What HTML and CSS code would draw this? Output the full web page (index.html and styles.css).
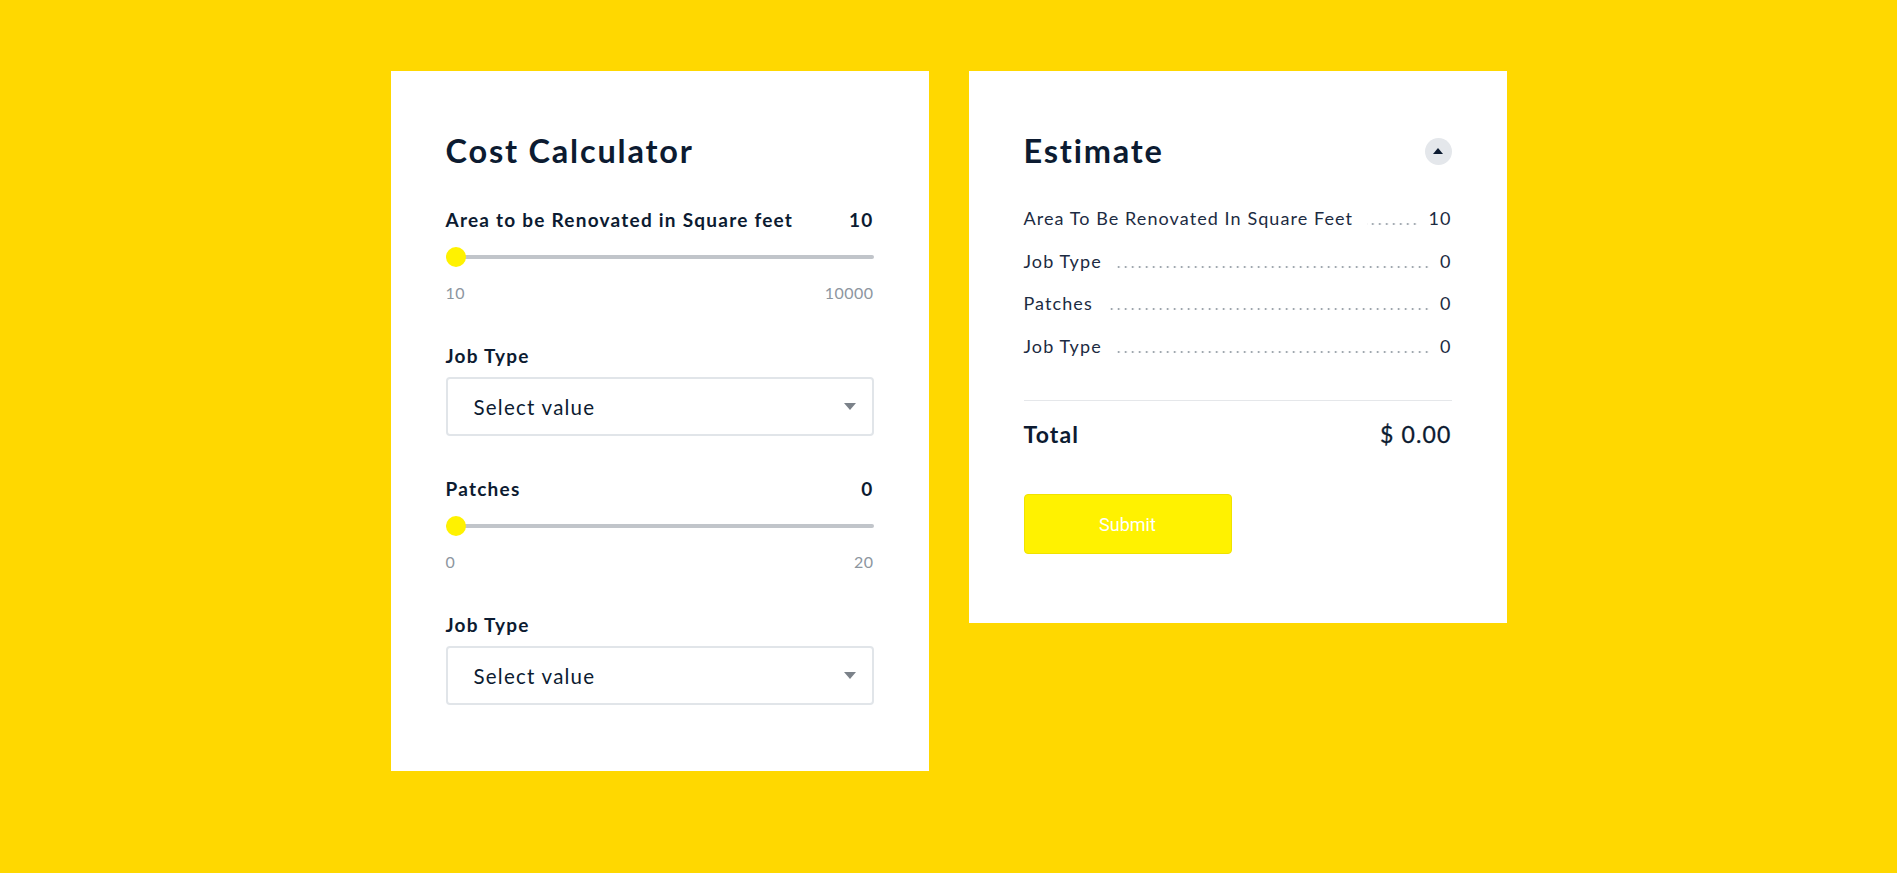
FILE: index.html
```html
<!DOCTYPE html>
<html lang="en">
<head>
<meta charset="utf-8">
<title>Cost Calculator</title>
<link rel="stylesheet" href="styles.css">
</head>
<body>
<div class="page">
  <section class="card calc">
    <h1 class="card-title">Cost Calculator</h1>
    <div class="fields">
      <div class="field">
        <div class="field-head"><span>Area to be Renovated in Square feet</span><span>10</span></div>
        <div class="slider"><div class="track"></div><div class="thumb"></div></div>
        <div class="range"><span>10</span><span>10000</span></div>
      </div>
      <div class="field">
        <div class="field-head"><span>Job Type</span></div>
        <div class="select"><span>Select value</span><span class="caret"></span></div>
      </div>
      <div class="field">
        <div class="field-head"><span>Patches</span><span>0</span></div>
        <div class="slider"><div class="track"></div><div class="thumb"></div></div>
        <div class="range"><span>0</span><span>20</span></div>
      </div>
      <div class="field">
        <div class="field-head"><span>Job Type</span></div>
        <div class="select"><span>Select value</span><span class="caret"></span></div>
      </div>
    </div>
  </section>
  <section class="card estimate">
    <div class="est-head">
      <h1 class="card-title">Estimate</h1>
      <button class="toggle" type="button"><span class="up"></span></button>
    </div>
    <div class="rows">
      <div class="row"><span class="row-label">Area To Be Renovated In Square Feet</span><span class="dots"></span><span class="row-val">10</span></div>
      <div class="row"><span class="row-label">Job Type</span><span class="dots"></span><span class="row-val">0</span></div>
      <div class="row"><span class="row-label">Patches</span><span class="dots"></span><span class="row-val">0</span></div>
      <div class="row"><span class="row-label">Job Type</span><span class="dots"></span><span class="row-val">0</span></div>
    </div>
    <div class="divider"></div>
    <div class="total"><span class="total-label">Total</span><span class="total-val">$ 0.00</span></div>
    <button class="submit" type="button">Submit</button>
  </section>
</div>
</body>
</html>
```
FILE: styles.css
```css
* { box-sizing: border-box; }
html, body { margin: 0; padding: 0; }
body {
  background: #ffd800;
  min-height: 100vh;
  font-family: "Lato", "Liberation Sans", sans-serif;
  color: #0c1b31;
}
.page {
  display: flex;
  justify-content: center;
  align-items: flex-start;
  gap: 40px;
  padding-top: 71px;
}
.card {
  width: 538px;
  background: #fff;
  padding: 61px 55px 66px;
}
.card-title {
  margin: 0;
  font-size: 32.5px;
  line-height: 38px;
  font-weight: 700;
  letter-spacing: 0.055em;
  color: #0c1b31;
}
.calc .card-title { margin-bottom: 38px; }
.fields {
  display: flex;
  flex-direction: column;
  gap: 41px;
}
.field-head {
  display: flex;
  justify-content: space-between;
  font-size: 19px;
  line-height: 24px;
  font-weight: 700;
  letter-spacing: 0.065em;
}
.slider {
  position: relative;
  height: 20px;
  margin-top: 15px;
  display: flex;
  align-items: center;
}
.track {
  width: 100%;
  height: 4px;
  border-radius: 2px;
  background: #c1c5ca;
}
.thumb {
  position: absolute;
  left: 0;
  top: 0;
  width: 20px;
  height: 20px;
  border-radius: 50%;
  background: #fff200;
}
.range {
  display: flex;
  justify-content: space-between;
  margin-top: 16px;
  font-size: 16px;
  line-height: 20px;
  letter-spacing: 0.03em;
  color: #8d969f;
}
.select {
  margin-top: 9px;
  height: 59px;
  border: 2px solid #e1e5e9;
  border-radius: 4px;
  display: flex;
  align-items: center;
  justify-content: space-between;
  padding: 0 16px 0 26px;
  font-size: 20.5px;
  letter-spacing: 0.06em;
  color: #0c1b31;
}
.caret {
  width: 0;
  height: 0;
  border-left: 6px solid transparent;
  border-right: 6px solid transparent;
  border-top: 7px solid #7b8289;
}
.est-head {
  display: flex;
  justify-content: space-between;
  align-items: center;
}
.toggle {
  width: 27px;
  height: 27px;
  border: none;
  border-radius: 50%;
  background: #e4e7eb;
  padding: 0;
  display: flex;
  align-items: center;
  justify-content: center;
}
.up {
  width: 0;
  height: 0;
  border-left: 5px solid transparent;
  border-right: 5px solid transparent;
  border-bottom: 6px solid #0c1b31;
}
.rows {
  margin-top: 36px;
  display: flex;
  flex-direction: column;
  gap: 18.7px;
}
.row {
  display: flex;
  align-items: baseline;
  font-size: 18px;
  line-height: 24px;
  letter-spacing: 0.06em;
  color: #1c2b42;
}
.dots {
  flex: 1;
  height: 2px;
  margin: 0 10px 0 14px;
  background-image: radial-gradient(circle, #8d969f 0.9px, transparent 1.2px);
  background-size: 7px 2px;
  background-repeat: repeat-x;
  background-position: right bottom;
}
.divider {
  margin-top: 42px;
  height: 1px;
  background: #e5e7ea;
}
.total {
  margin-top: 19px;
  display: flex;
  justify-content: space-between;
  font-size: 23px;
  line-height: 28px;
  letter-spacing: 0.05em;
}
.total-label { font-weight: 700; }
.total-val { font-weight: 400; -webkit-text-stroke: 0.3px #0c1b31; }
.submit {
  margin-top: 46px;
  margin-bottom: 3px;
  width: 208px;
  height: 60px;
  background: #fff200;
  border: 1px solid #f0e200;
  border-radius: 4px;
  color: #fff;
  font-family: "Roboto", "Liberation Sans", sans-serif;
  font-size: 18px;
  display: block;
}
```
